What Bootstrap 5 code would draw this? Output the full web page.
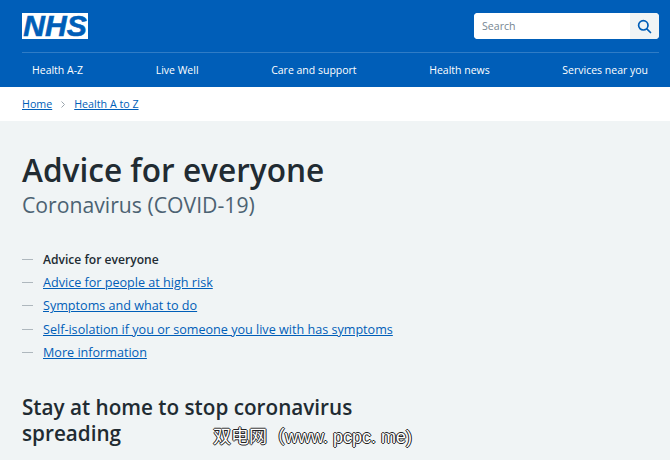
<!DOCTYPE html>
<html lang="en">
<head>
  <meta charset="UTF-8">
  <title>Advice for everyone</title>
  <link href="https://cdn.jsdelivr.net/npm/bootstrap@5.3.3/dist/css/bootstrap.min.css" rel="stylesheet">
  <style>
    html, body { height: 460px; overflow: hidden; }
    body { font-family: "Open Sans", "Noto Sans", sans-serif; background: #f0f4f5; color: #212b32; position: relative; }
    .site-head { background: #005eb8; height: 87px; padding: 13px 11px 0 22px; }
    .logo-box { width: 66px; height: 26px; background: #fff; color: #005eb8; font: italic 700 30px/26px "Liberation Sans", sans-serif; -webkit-text-stroke: 0.6px #005eb8; text-align: center; }
    .search-wrap { width: 185px; height: 26px; border-radius: 4px; overflow: hidden; background: #fff; }
    .search-wrap input { border: 0; outline: 0; flex: 1; min-width: 0; padding: 2px 8px 0; font-size: 10.6px; color: #4c6272; background: #fff; }
    .search-wrap input::placeholder { color: #768692; opacity: 1; }
    .search-btn { width: 29px; background: #f0f4f5; border: 0; padding: 0 1px 0 0; }
    .main-menu { border-top: 1px solid #2f7cc6; margin-top: 13px; height: 35px; padding: 2px 11px 0 10px; font-size: 10.5px; }
    .main-menu a { color: #fff; text-decoration: none; }
    .crumbs { background: #fff; height: 34px; padding: 0 22px; font-size: 10.7px; }
    .crumbs a, .side-links a { color: #005eb8; text-decoration: underline; }
    .crumb-sep { margin: 1px 9px 0 9px; }
    .page-body { padding: 29px 22px 0; }
    .page-title { font-size: 31.6px; line-height: 40px; font-weight: 600; margin: 0; }
    .page-sub { font-size: 21.2px; line-height: 30px; color: #4c6272; margin: 0 0 28px; }
    .side-links { list-style: none; margin: 0; padding: 0; font-size: 12.6px; }
    .side-links li { height: 23.2px; line-height: 23px; display: flex; align-items: center; }
    .side-links li::before { content: ""; width: 11px; height: 1px; background: #aeb7bd; margin-right: 10px; flex: none; }
    .side-links .now { font-weight: 600; font-size: 12.1px; }
    .section-title { font-size: 20.7px; line-height: 26px; font-weight: 600; width: 345px; margin: 30px 0 0; }
    .wm { position: absolute; left: 213px; top: 425px; font-family: "Liberation Sans", "Noto Sans CJK SC", sans-serif; font-size: 18px; line-height: 24px; color: #fff; white-space: nowrap; text-shadow: -1px 0 #222, 1px 0 #222, 0 -1px #222, 0 1px #222; }
  </style>
</head>
<body>
  <header class="site-head">
    <div class="d-flex justify-content-between align-items-center">
      <div class="logo-box">NHS</div>
      <div class="search-wrap d-flex">
        <input type="text" placeholder="Search">
        <button class="search-btn d-flex align-items-center justify-content-center" type="button" aria-label="Search">
          <svg width="15" height="15" viewBox="0 0 15 15" fill="none" stroke="#005eb8" stroke-width="1.7" stroke-linecap="round"><circle cx="6.3" cy="6.3" r="4.7"/><path d="M9.8 9.8 13.5 13.5"/></svg>
        </button>
      </div>
    </div>
    <nav class="main-menu d-flex justify-content-between align-items-center">
      <a href="#">Health A-Z</a>
      <a href="#">Live Well</a>
      <a href="#">Care and support</a>
      <a href="#">Health news</a>
      <a href="#">Services near you</a>
    </nav>
  </header>

  <div class="crumbs d-flex align-items-center">
    <a href="#">Home</a>
    <svg class="crumb-sep" width="4" height="7" viewBox="0 0 4 7" fill="none" stroke="#9aa5ad" stroke-width="1"><path d="M.5.5 3.5 3.5.5 6.5"/></svg>
    <a href="#">Health A to Z</a>
  </div>

  <main class="page-body">
    <h1 class="page-title">Advice for everyone</h1>
    <p class="page-sub">Coronavirus (COVID-19)</p>
    <ul class="side-links">
      <li><span class="now">Advice for everyone</span></li>
      <li><a href="#">Advice for people at high risk</a></li>
      <li><a href="#">Symptoms and what to do</a></li>
      <li><a href="#">Self-isolation if you or someone you live with has symptoms</a></li>
      <li><a href="#">More information</a></li>
    </ul>
    <h2 class="section-title">Stay at home to stop coronavirus spreading</h2>
  </main>

  <div class="wm">双电网（www. pcpc. me)</div>

  <script src="https://cdn.jsdelivr.net/npm/bootstrap@5.3.3/dist/js/bootstrap.bundle.min.js"></script>
</body>
</html>
